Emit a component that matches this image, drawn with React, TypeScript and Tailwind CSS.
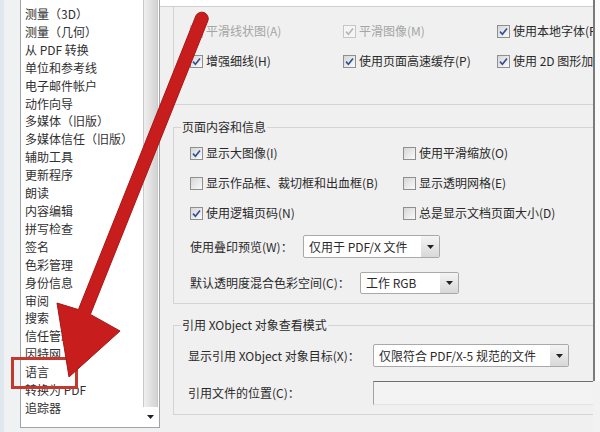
import React from "react";

const items = [
  "测量（3D）",
  "测量（几何）",
  "从 PDF 转换",
  "单位和参考线",
  "电子邮件帐户",
  "动作向导",
  "多媒体（旧版）",
  "多媒体信任（旧版）",
  "辅助工具",
  "更新程序",
  "朗读",
  "内容编辑",
  "拼写检查",
  "签名",
  "色彩管理",
  "身份信息",
  "审阅",
  "搜索",
  "信任管理器",
  "因特网",
  "语言",
  "转换为 PDF",
  "追踪器",
];

function Box({ checked, disabled }: { checked?: boolean; disabled?: boolean }) {
  return (
    <span
      className={
        disabled
          ? "flex h-[13px] w-[13px] shrink-0 items-center justify-center border border-[#c6c6c6] bg-[#f5f5f5]"
          : "flex h-[13px] w-[13px] shrink-0 items-center justify-center border border-[#8e8f8f] bg-gradient-to-br from-[#d6d6d6] to-[#fbfbfb]"
      }
    >
      {checked && (
        <svg width="9" height="9" viewBox="0 0 9 9">
          <path
            d="M1 4.6 L3.4 7.2 L8 1.4"
            fill="none"
            stroke={disabled ? "#b5b5b5" : "#2f4f93"}
            strokeWidth="1.6"
          />
        </svg>
      )}
    </span>
  );
}

function Check({
  label,
  checked,
  disabled,
}: {
  label: string;
  checked?: boolean;
  disabled?: boolean;
}) {
  return (
    <div className="flex h-[18px] items-center whitespace-nowrap">
      <Box checked={checked} disabled={disabled} />
      <span className={disabled ? "ml-[3px] text-[#a5a5a5]" : "ml-[3px]"}>{label}</span>
    </div>
  );
}

function Tri() {
  return (
    <svg width="7" height="4" viewBox="0 0 7 4">
      <path d="M0 0 H7 L3.5 4 Z" fill="#222" />
    </svg>
  );
}

function Select({ text, className }: { text: string; className: string }) {
  return (
    <div
      className={
        "flex items-stretch overflow-hidden rounded-[2px] border border-[#a9a9a9] bg-white " +
        className
      }
    >
      <div className="flex flex-1 items-center whitespace-nowrap pl-[5px]">{text}</div>
      <div className="flex w-[18px] items-center justify-center bg-gradient-to-b from-[#f4f4f4] to-[#d8d8d8]">
        <Tri />
      </div>
    </div>
  );
}

export default function App() {
  return (
    <div className="relative flex h-[432px] w-[600px] overflow-hidden bg-[#f0f0f0] font-['Noto_Sans_CJK_SC','Noto_Sans',sans-serif] text-[12px] text-[#2a2a2a]">
      {/* left strip */}
      <div className="w-[20px] shrink-0 border-l-[4px] border-[#e1e7ee] bg-[#eff1f3]" />

      {/* list box */}
      <div className="flex h-[428px] w-[140px] shrink-0 border-x border-b border-[#9ea4a9] bg-white">
        <ul className="w-[122px] overflow-hidden whitespace-nowrap pl-[4px] pt-[5px] leading-[17.9px] text-[#303030]">
          {items.map((it) => (
            <li key={it}>{it}</li>
          ))}
        </ul>
        <div className="flex w-[15px] flex-col">
          <div className="h-[407px] border-x border-[#c9c9c9] bg-gradient-to-r from-[#efefef] to-[#d3d3d3]" />
          <div className="flex flex-1 items-center justify-center">
            <Tri />
          </div>
        </div>
      </div>

      {/* right panel */}
      <div className="flex flex-1">
        <div className="flex w-[433px] flex-col">
          <div className="h-[7px] border-b border-[#cfcfcf] bg-white" />

          {/* group A (display) */}
          <div className="ml-[13px] h-[98px] border-b border-l border-[#d4d4d4] pl-[16px] pt-[15px]">
            <div className="grid grid-cols-[153px_154px_1fr] gap-y-[12px]">
              <Check label="平滑线状图(A)" disabled />
              <Check label="平滑图像(M)" checked disabled />
              <Check label="使用本地字体(F)" checked />
              <Check label="增强细线(H)" checked />
              <Check label="使用页面高速缓存(P)" checked />
              <Check label="使用 2D 图形加速(G)" checked />
            </div>
          </div>

          {/* group B */}
          <div className="ml-[13px] mt-[22px] flex flex-col border-y border-l border-[#d4d4d4] pb-[9px] pl-[16px]">
            <div className="-ml-[9px] -mt-[10px] w-fit bg-[#f0f0f0] px-[1px] leading-[18px]">
              页面内容和信息
            </div>
            <div className="mt-[8px] grid grid-cols-[213px_1fr] gap-y-[12px]">
              <Check label="显示大图像(I)" checked />
              <Check label="使用平滑缩放(O)" />
              <Check label="显示作品框、裁切框和出血框(B)" />
              <Check label="显示透明网格(E)" />
              <Check label="使用逻辑页码(N)" checked />
              <Check label="总是显示文档页面大小(D)" />
            </div>
            <div className="mt-[13px] flex items-center">
              <span className="w-[113px] whitespace-nowrap">使用叠印预览(W)：</span>
              <Select text="仅用于 PDF/X 文件" className="h-[23px] w-[137px]" />
            </div>
            <div className="mt-[14px] flex items-center">
              <span className="w-[170px] whitespace-nowrap">默认透明度混合色彩空间(C)：</span>
              <Select text="工作 RGB" className="h-[22px] w-[99px]" />
            </div>
          </div>

          {/* group C */}
          <div className="ml-[13px] mt-[21px] flex flex-col border-y border-l border-[#d4d4d4] pb-[9px] pl-[14px]">
            <div className="-ml-[7px] -mt-[10px] w-fit bg-[#f0f0f0] px-[1px] leading-[18px]">
              引用 XObject 对象查看模式
            </div>
            <div className="mt-[10px] flex items-center">
              <span className="w-[185px] whitespace-nowrap">显示引用 XObject 对象目标(X)：</span>
              <Select text="仅限符合 PDF/X-5 规范的文件" className="h-[23px] w-[196px]" />
            </div>
            <div className="mt-[14px] flex items-center">
              <span className="w-[185px] whitespace-nowrap">引用文件的位置(C)：</span>
              <div className="h-[24px] flex-1 border-b border-l border-t border-b-[#e3e3e3] border-l-[#a3a3a3] border-t-[#6f6f6f] bg-[#f3f3f3]" />
            </div>
          </div>
        </div>
        <div className="flex flex-1 flex-col">
          <div className="h-[381px] border-l-2 border-[#7a7a7a] bg-[#fafafa]" />
          <div className="flex-1 bg-[#f2f2f2]" />
        </div>
      </div>

      {/* red highlight box over "语言" */}
      <div className="pointer-events-none absolute left-[11px] top-[357px] h-[32px] w-[67px] border-[3px] border-[#c23a2e]" />

      {/* red arrow annotation */}
      <svg
        className="pointer-events-none absolute left-0 top-0"
        width="600"
        height="432"
        viewBox="0 0 600 432"
      >
        <path
          d="M196 15.6 A6.5 6.5 0 0 1 208 20.4 L90.4 314.4 L120 331 L69 377 L57 303 L78.4 309.6 Z"
          fill="#c81d1d"
          stroke="#a81616"
          strokeWidth="1"
          strokeLinejoin="round"
        />
      </svg>
    </div>
  );
}
